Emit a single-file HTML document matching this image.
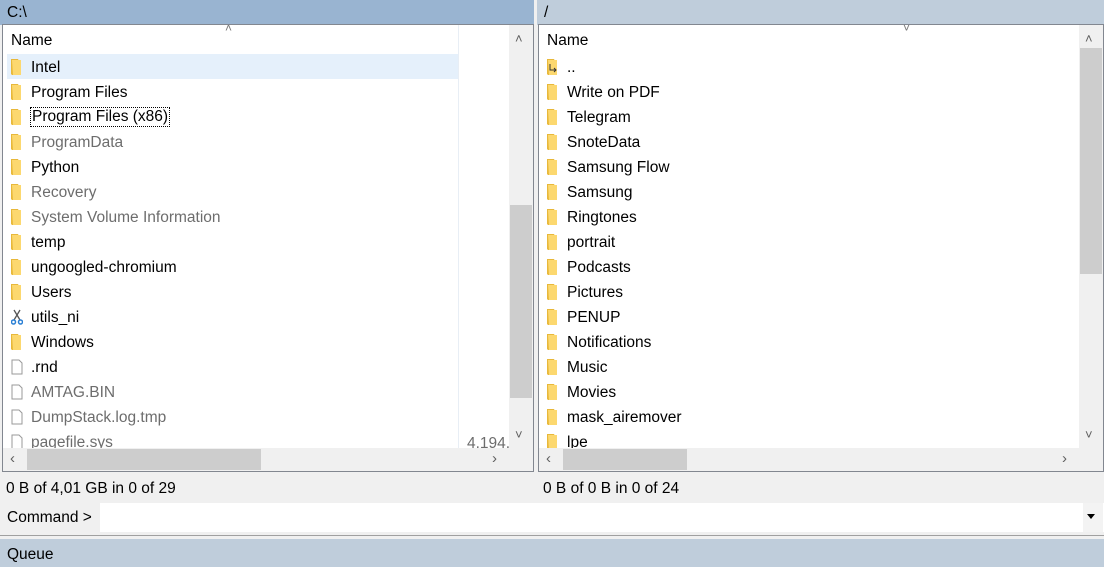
<!DOCTYPE html>
<html><head><meta charset="utf-8"><style>
*{margin:0;padding:0;box-sizing:border-box}
body{width:1104px;height:567px;background:#f0f0f0;font-family:"Segoe UI","Liberation Sans",sans-serif;font-size:15.5px;color:#000;position:relative;overflow:hidden}
.a{position:absolute}
.row{position:absolute;height:25px;line-height:25px;white-space:nowrap}
.row .t{position:absolute;left:24px;top:1px}
.fd{position:absolute;left:4px;top:5px;width:12px;height:16px}
.g{color:#6d6d6d}
.sb{background:#f0f0f0}
.th{background:#cdcdcd}
.ar{position:absolute;color:#606060;font-size:13px;line-height:14px}
</style></head><body>
<svg width="0" height="0" style="position:absolute"><defs>
<symbol id="f" viewBox="0 0 12 16"><path d="M0 0h7l1 2v14H1L0 15z" fill="#e8b83a"/><path d="M1 1h9v15H2z" fill="#fcd86f"/></symbol>
<symbol id="p" viewBox="0 0 12 16"><path d="M1 1h7l3 3v11H1z" fill="#fff" stroke="#9a9a9a"/></symbol>
</defs></svg>

<div class="a" style="left:0;top:0;width:534px;height:25px;background:#99b4d1"></div>
<div class="a" style="left:7px;top:3px;line-height:20px">C:\</div>
<div class="a" style="left:537px;top:0;width:567px;height:25px;background:#bfcddb"></div>
<div class="a" style="left:544px;top:3px;line-height:20px">/</div>

<div class="a" style="left:2px;top:24px;width:532px;height:448px;border:1px solid #828790;background:#fff;overflow:hidden">
 <div class="a" style="left:8px;top:6px;line-height:20px">Name</div>
 <div class="a" style="left:222px;top:-4px;color:#777;font-size:12px">&#x2C4;</div>
 <div class="a" style="left:455px;top:0;width:1px;height:423px;background:#e8eef5"></div>
 <div class="a" style="left:4px;top:29px;width:451px;height:25px;background:#e5f0fb"></div>
 <div class="row" style="left:4px;top:29px"><svg class="fd"><use href="#f"/></svg><span class="t">Intel</span></div>
 <div class="row" style="left:4px;top:54px"><svg class="fd"><use href="#f"/></svg><span class="t">Program Files</span></div>
 <div class="row" style="left:4px;top:79px"><svg class="fd"><use href="#f"/></svg><span class="t" style="left:23px;top:3px;height:20px;line-height:18px;border:1px dotted #000;padding:0 1px">Program Files (x86)</span></div>
 <div class="row g" style="left:4px;top:104px"><svg class="fd"><use href="#f"/></svg><span class="t">ProgramData</span></div>
 <div class="row" style="left:4px;top:129px"><svg class="fd"><use href="#f"/></svg><span class="t">Python</span></div>
 <div class="row g" style="left:4px;top:154px"><svg class="fd"><use href="#f"/></svg><span class="t">Recovery</span></div>
 <div class="row g" style="left:4px;top:179px"><svg class="fd"><use href="#f"/></svg><span class="t">System Volume Information</span></div>
 <div class="row" style="left:4px;top:204px"><svg class="fd"><use href="#f"/></svg><span class="t">temp</span></div>
 <div class="row" style="left:4px;top:229px"><svg class="fd"><use href="#f"/></svg><span class="t">ungoogled-chromium</span></div>
 <div class="row" style="left:4px;top:254px"><svg class="fd"><use href="#f"/></svg><span class="t">Users</span></div>
 <div class="row" style="left:4px;top:279px"><svg class="fd" viewBox="0 0 12 16"><path d="M3 1l6 10M9 1L3 11" stroke="#555" stroke-width="1.3"/><circle cx="2.5" cy="13" r="2" fill="none" stroke="#2a7fd4" stroke-width="1.5"/><circle cx="9.5" cy="13" r="2" fill="none" stroke="#2a7fd4" stroke-width="1.5"/></svg><span class="t">utils_ni</span></div>
 <div class="row" style="left:4px;top:304px"><svg class="fd"><use href="#f"/></svg><span class="t">Windows</span></div>
 <div class="row" style="left:4px;top:329px"><svg class="fd"><use href="#p"/></svg><span class="t">.rnd</span></div>
 <div class="row g" style="left:4px;top:354px"><svg class="fd"><use href="#p"/></svg><span class="t">AMTAG.BIN</span></div>
 <div class="row g" style="left:4px;top:379px"><svg class="fd"><use href="#p"/></svg><span class="t">DumpStack.log.tmp</span></div>
 <div class="row g" style="left:4px;top:404px"><svg class="fd"><use href="#p"/></svg><span class="t">pagefile.sys</span></div>
 <div class="a g" style="left:464px;top:406px;line-height:25px">4.194.</div>
 <div class="a sb" style="left:506px;top:0;width:24px;height:423px"></div>
 <div class="a th" style="left:507px;top:180px;width:22px;height:193px"></div>
 <div class="ar" style="left:512px;top:7px">&#x2C4;</div>
 <div class="ar" style="left:512px;top:403px">&#x2C5;</div>
 <div class="a sb" style="left:0;top:423px;width:530px;height:23px"></div>
 <div class="a th" style="left:24px;top:424px;width:234px;height:21px"></div>
 <div class="ar" style="left:7px;top:427px;font-size:15px">&#x2039;</div>
 <div class="ar" style="left:489px;top:427px;font-size:15px">&#x203A;</div>
</div>

<div class="a" style="left:538px;top:24px;width:566px;height:448px;border:1px solid #828790;background:#fff;overflow:hidden">
 <div class="a" style="left:8px;top:6px;line-height:20px">Name</div>
 <div class="a" style="left:364px;top:-4px;color:#777;font-size:12px">&#x2C5;</div>
 <div class="row" style="left:4px;top:29px"><svg class="fd" viewBox="0 0 12 16"><path d="M0 0h7l1 2v14H1L0 15z" fill="#e8b83a"/><path d="M1 1h9v15H2z" fill="#fcd86f"/><path d="M3 5v6h6M7 9l2 2-2 2" stroke="#333" fill="none" stroke-width="1"/></svg><span class="t">..</span></div>
 <div class="row" style="left:4px;top:54px"><svg class="fd"><use href="#f"/></svg><span class="t">Write on PDF</span></div>
 <div class="row" style="left:4px;top:79px"><svg class="fd"><use href="#f"/></svg><span class="t">Telegram</span></div>
 <div class="row" style="left:4px;top:104px"><svg class="fd"><use href="#f"/></svg><span class="t">SnoteData</span></div>
 <div class="row" style="left:4px;top:129px"><svg class="fd"><use href="#f"/></svg><span class="t">Samsung Flow</span></div>
 <div class="row" style="left:4px;top:154px"><svg class="fd"><use href="#f"/></svg><span class="t">Samsung</span></div>
 <div class="row" style="left:4px;top:179px"><svg class="fd"><use href="#f"/></svg><span class="t">Ringtones</span></div>
 <div class="row" style="left:4px;top:204px"><svg class="fd"><use href="#f"/></svg><span class="t">portrait</span></div>
 <div class="row" style="left:4px;top:229px"><svg class="fd"><use href="#f"/></svg><span class="t">Podcasts</span></div>
 <div class="row" style="left:4px;top:254px"><svg class="fd"><use href="#f"/></svg><span class="t">Pictures</span></div>
 <div class="row" style="left:4px;top:279px"><svg class="fd"><use href="#f"/></svg><span class="t">PENUP</span></div>
 <div class="row" style="left:4px;top:304px"><svg class="fd"><use href="#f"/></svg><span class="t">Notifications</span></div>
 <div class="row" style="left:4px;top:329px"><svg class="fd"><use href="#f"/></svg><span class="t">Music</span></div>
 <div class="row" style="left:4px;top:354px"><svg class="fd"><use href="#f"/></svg><span class="t">Movies</span></div>
 <div class="row" style="left:4px;top:379px"><svg class="fd"><use href="#f"/></svg><span class="t">mask_airemover</span></div>
 <div class="row" style="left:4px;top:404px"><svg class="fd"><use href="#f"/></svg><span class="t">lpe</span></div>
 <div class="a sb" style="left:540px;top:0;width:24px;height:446px"></div>
 <div class="a th" style="left:541px;top:23px;width:22px;height:226px"></div>
 <div class="ar" style="left:546px;top:7px">&#x2C4;</div>
 <div class="ar" style="left:546px;top:403px">&#x2C5;</div>
 <div class="a sb" style="left:0;top:423px;width:541px;height:23px"></div>
 <div class="a th" style="left:24px;top:424px;width:124px;height:21px"></div>
 <div class="ar" style="left:7px;top:427px;font-size:15px">&#x2039;</div>
 <div class="ar" style="left:523px;top:427px;font-size:15px">&#x203A;</div>
</div>

<div class="a" style="left:6px;top:479px;line-height:20px">0 B of 4,01 GB in 0 of 29</div>
<div class="a" style="left:543px;top:479px;line-height:20px">0 B of 0 B in 0 of 24</div>

<div class="a" style="left:7px;top:508px;line-height:20px">Command &gt;</div>
<div class="a" style="left:100px;top:503px;width:1004px;height:29px;background:#fff"></div>
<div class="a" style="left:1083px;top:503px;width:20px;height:29px;background:#f3f3f3"></div>
<div class="a" style="left:1087px;top:514px;width:0;height:0;border-left:4px solid transparent;border-right:4px solid transparent;border-top:5px solid #000"></div>
<div class="a" style="left:0;top:535px;width:1104px;height:1px;background:#a0a0a0"></div>

<div class="a" style="left:0;top:539px;width:1104px;height:28px;background:#bfcddb"></div>
<div class="a" style="left:7px;top:545px;line-height:20px">Queue</div>
</body></html>
